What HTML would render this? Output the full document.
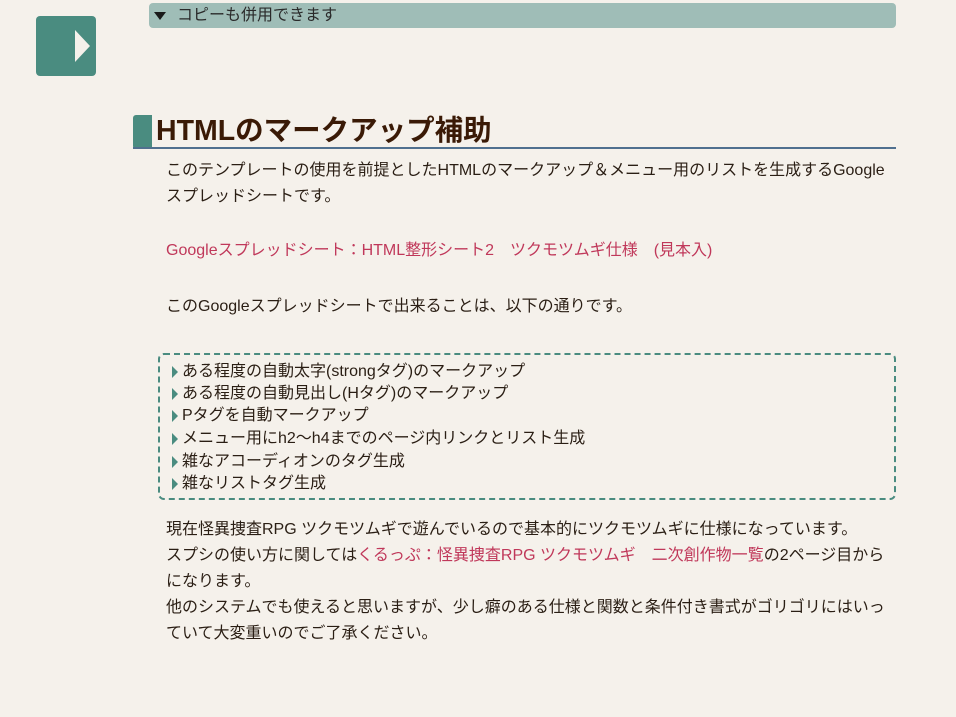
<!DOCTYPE html>
<html><head><meta charset="utf-8"><style>
body{margin:0;background:#f5f1eb;width:956px;height:717px;overflow:hidden;position:relative;font-family:"Liberation Sans","Noto Sans CJK JP",sans-serif;color:#2a1e14;font-size:16px}
.icon{position:absolute;left:36px;top:16px;width:60px;height:60px;background:#4a8c80;border-radius:4px}
.icon:after{content:"";position:absolute;left:39px;top:14px;border-left:15px solid #f5f1eb;border-top:16px solid transparent;border-bottom:16px solid transparent}
.sum{position:absolute;left:149px;top:3px;width:747px;height:25px;background:#9fbdb7;border-radius:4px;font-size:16px;line-height:25px}
.sum span{position:absolute;left:5px;top:9px;border-top:8px solid #1a1a1a;border-left:6px solid transparent;border-right:6px solid transparent}
.sum b{font-weight:normal;position:absolute;left:28px;top:0;color:#2a2a2a}
.hbar{position:absolute;left:133px;top:115px;width:19px;height:34px;background:#4a8c80;border-radius:3px 0 0 3px}
.hline{position:absolute;left:133px;top:147px;width:763px;height:2px;background:#50708f}
h2{position:absolute;left:156px;top:112px;margin:0;font-size:28.5px;font-weight:bold;color:#3a1a06;line-height:38px}
p{position:absolute;left:166px;margin:0;width:740px;line-height:26px}
a{color:#c0385a;text-decoration:none}
.box{position:absolute;left:158px;top:353px;width:734px;height:143px;border:2px dashed #4a8c80;border-radius:6px}
.box div{position:absolute;left:22px;line-height:22px}
.box div:before{content:"";position:absolute;left:-10px;top:5px;border-left:6px solid #4a8c80;border-top:6px solid transparent;border-bottom:6px solid transparent}
</style></head><body>
<div class="icon"></div>
<div class="sum"><span></span><b>コピーも併用できます</b></div>
<div class="hbar"></div><div class="hline"></div>
<h2>HTMLのマークアップ補助</h2>
<p style="top:158px">このテンプレートの使用を前提としたHTMLのマークアップ＆メニュー用のリストを生成するGoogle<br>スプレッドシートです。</p>
<p style="top:238px"><a>Googleスプレッドシート：HTML整形シート2　ツクモツムギ仕様　(見本入)</a></p>
<p style="top:294px">このGoogleスプレッドシートで出来ることは、以下の通りです。</p>
<div class="box">
<div style="top:6px">ある程度の自動太字(strongタグ)のマークアップ</div>
<div style="top:28px">ある程度の自動見出し(Hタグ)のマークアップ</div>
<div style="top:50px">Pタグを自動マークアップ</div>
<div style="top:73px">メニュー用にh2〜h4までのページ内リンクとリスト生成</div>
<div style="top:96px">雑なアコーディオンのタグ生成</div>
<div style="top:118px">雑なリストタグ生成</div>
</div>
<p style="top:517px">現在怪異捜査RPG ツクモツムギで遊んでいるので基本的にツクモツムギに仕様になっています。<br>スプシの使い方に関しては<a>くるっぷ：怪異捜査RPG ツクモツムギ　二次創作物一覧</a>の2ページ目から<br>になります。<br>他のシステムでも使えると思いますが、少し癖のある仕様と関数と条件付き書式がゴリゴリにはいっ<br>ていて大変重いのでご了承ください。</p>
</body></html>
